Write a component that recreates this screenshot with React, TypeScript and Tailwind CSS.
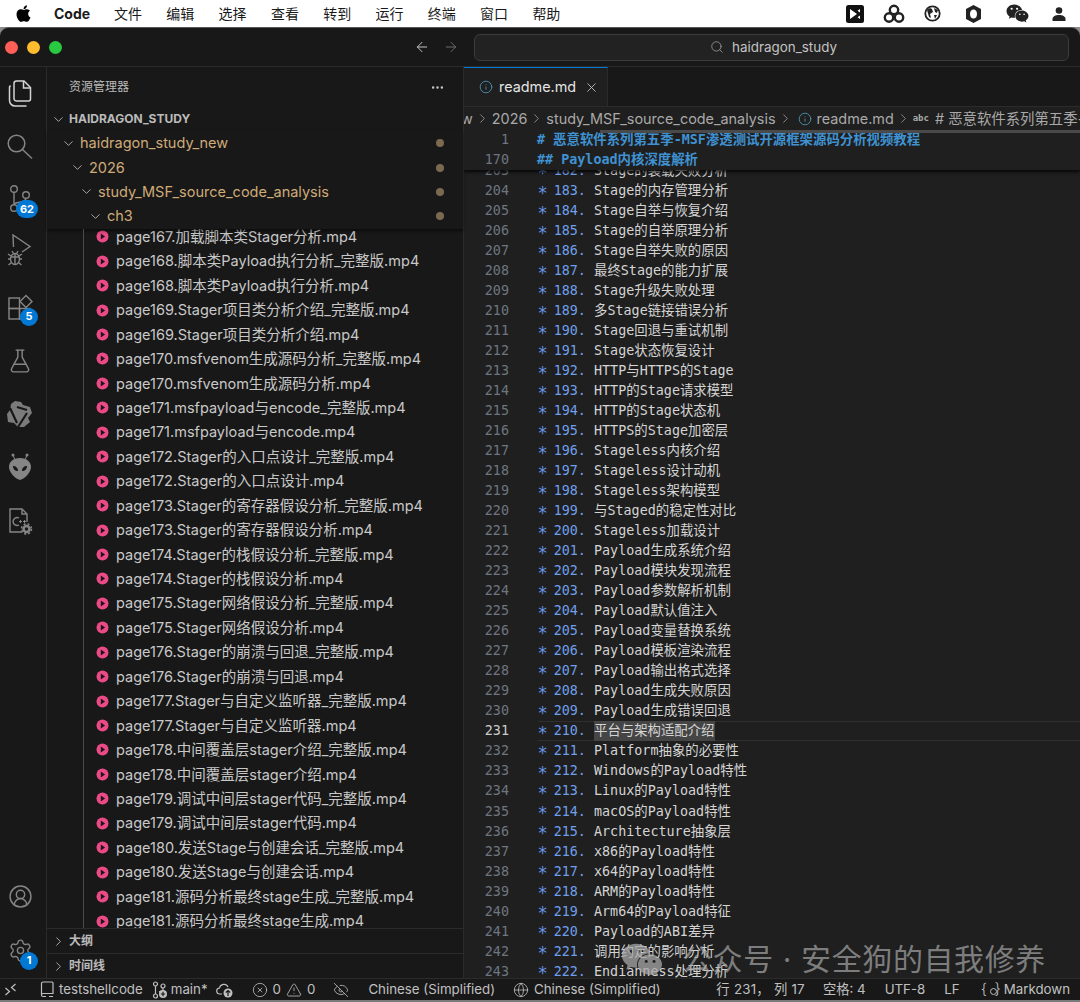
import { ArrowLeft, ArrowRight, ChevronDown, ChevronRight, CircleUserRound, CircleX, Ellipsis, EyeOff, FlaskConical, Globe, Info, Search, Settings, TriangleAlert, X } from "lucide-react";
import { FaApple, FaWeixin } from "react-icons/fa";

const ui = "font-['Inter','Noto_Sans_CJK_SC',sans-serif]";
const mono = "font-['DejaVu_Sans_Mono','Noto_Sans_CJK_SC',monospace]";

const menus = ["文件", "编辑", "选择", "查看", "转到", "运行", "终端", "窗口", "帮助"];

const files = [
  "page167.加载脚本类Stager分析.mp4",
  "page168.脚本类Payload执行分析_完整版.mp4",
  "page168.脚本类Payload执行分析.mp4",
  "page169.Stager项目类分析介绍_完整版.mp4",
  "page169.Stager项目类分析介绍.mp4",
  "page170.msfvenom生成源码分析_完整版.mp4",
  "page170.msfvenom生成源码分析.mp4",
  "page171.msfpayload与encode_完整版.mp4",
  "page171.msfpayload与encode.mp4",
  "page172.Stager的入口点设计_完整版.mp4",
  "page172.Stager的入口点设计.mp4",
  "page173.Stager的寄存器假设分析_完整版.mp4",
  "page173.Stager的寄存器假设分析.mp4",
  "page174.Stager的栈假设分析_完整版.mp4",
  "page174.Stager的栈假设分析.mp4",
  "page175.Stager网络假设分析_完整版.mp4",
  "page175.Stager网络假设分析.mp4",
  "page176.Stager的崩溃与回退_完整版.mp4",
  "page176.Stager的崩溃与回退.mp4",
  "page177.Stager与自定义监听器_完整版.mp4",
  "page177.Stager与自定义监听器.mp4",
  "page178.中间覆盖层stager介绍_完整版.mp4",
  "page178.中间覆盖层stager介绍.mp4",
  "page179.调试中间层stager代码_完整版.mp4",
  "page179.调试中间层stager代码.mp4",
  "page180.发送Stage与创建会话_完整版.mp4",
  "page180.发送Stage与创建会话.mp4",
  "page181.源码分析最终stage生成_完整版.mp4",
  "page181.源码分析最终stage生成.mp4",
];

const lines = [
  "Stage的装载失败分析", "Stage的内存管理分析", "Stage自举与恢复介绍", "Stage的自举原理分析", "Stage自举失败的原因",
  "最终Stage的能力扩展", "Stage升级失败处理", "多Stage链接错误分析", "Stage回退与重试机制", "Stage状态恢复设计",
  "HTTP与HTTPS的Stage", "HTTP的Stage请求模型", "HTTP的Stage状态机", "HTTPS的Stage加密层", "Stageless内核介绍",
  "Stageless设计动机", "Stageless架构模型", "与Staged的稳定性对比", "Stageless加载设计", "Payload生成系统介绍",
  "Payload模块发现流程", "Payload参数解析机制", "Payload默认值注入", "Payload变量替换系统", "Payload模板渲染流程",
  "Payload输出格式选择", "Payload生成失败原因", "Payload生成错误回退", "平台与架构适配介绍", "Platform抽象的必要性",
  "Windows的Payload特性", "Linux的Payload特性", "macOS的Payload特性", "Architecture抽象层", "x86的Payload特性",
  "x64的Payload特性", "ARM的Payload特性", "Arm64的Payload特征", "Payload的ABI差异", "调用约定的影响分析", "Endianness处理分析",
];

function Badge({ text, className }: { text: string; className: string }) {
  return (
    <span className={`absolute flex h-[18px] items-center justify-center rounded-full bg-[#0078d4] text-[11px] font-bold text-white ${className}`}>
      {text}
    </span>
  );
}

function MenuBar() {
  return (
    <div className={`flex h-[27px] shrink-0 items-center bg-white pl-[14px] text-[14px] text-[#1a1a1a] ${ui}`}>
      <FaApple size={19} className="text-black" />
      <span className="ml-[21px] w-[60px] font-bold">Code</span>
      <div className="flex gap-[24.3px]">
        {menus.map((m) => (
          <span key={m}>{m}</span>
        ))}
      </div>
      <div className="ml-auto flex items-center">
        <svg width="18" height="18" viewBox="0 0 18 18" className="mr-[19px]">
          <rect width="18" height="18" rx="2.500" fill="#111" />
          <path d="M4 4l7 5-7 5zM14 4v3.500L11.500 5.800zM14 14v-3.500l-2.500 1.700z" fill="#fff" />
        </svg>
        <svg width="22" height="20" viewBox="0 0 22 20" fill="none" stroke="#222" strokeWidth="2.400" className="mr-[19px]">
          <circle cx="11" cy="6" r="4.200" />
          <circle cx="6" cy="13.500" r="4.200" />
          <circle cx="16" cy="13.500" r="4.200" />
        </svg>
        <svg width="17" height="17" viewBox="0 0 17 17" className="mr-[25px]">
          <circle cx="8.500" cy="8.500" r="7.200" fill="none" stroke="#222" strokeWidth="1.800" />
          <path d="M3 5l3-2 2 1 1 3-3 2 1 4-2-1zM10 3l4 2-1 3-2-1zM10 10l3 0-2 4z" fill="#222" />
        </svg>
        <svg width="15" height="18" viewBox="0 0 15 18" className="mr-[25px]">
          <path fillRule="evenodd" d="M7.500 0l7.500 4v10l-7.500 4L0 14V4zM7.500 4.500C5.500 4.500 4 6 4 9s1.500 4.500 3.500 4.500S11 12 11 9 9.500 4.500 7.500 4.500z" fill="#222" />
        </svg>
        <FaWeixin size={23} className="mr-[23px] text-[#222]" />
        <svg width="14" height="14" viewBox="0 0 14 14" className="mr-[14px]">
          <circle cx="7" cy="3.500" r="3.300" fill="#222" />
          <path d="M0.500 14v-2c0-2.500 3-4 6.500-4s6.500 1.500 6.500 4v2z" fill="#222" />
        </svg>
      </div>
    </div>
  );
}

function TitleBar() {
  return (
    <div className={`flex h-[39px] shrink-0 items-center border-b border-[#2b2b2b] pl-[5px] ${ui}`}>
      <span className="h-[13px] w-[13px] rounded-full bg-[#ff5f57]" />
      <span className="ml-[9px] h-[13px] w-[13px] rounded-full bg-[#febc2e]" />
      <span className="ml-[9px] h-[13px] w-[13px] rounded-full bg-[#28c840]" />
      <ArrowLeft size={16} strokeWidth={1.500} className="ml-[352px] text-[#c4c4c4]" />
      <ArrowRight size={16} strokeWidth={1.500} className="ml-[13px] text-[#6a6a6a]" />
      <div className="ml-[15px] flex h-[27px] w-[595px] items-center justify-center rounded-[6px] border border-[#3c3c3c] bg-[#222222] pl-[4px] text-[13.400px] text-[#c4c4c4]">
        <Search size={14} strokeWidth={1.300} className="mr-[8px] text-[#a8a8a8]" />
        haidragon_study
      </div>
    </div>
  );
}

function ActivityItem({ children }: { children: React.ReactNode }) {
  return <div className="relative flex h-[53.400px] w-[40px] items-center justify-center text-[#858585]">{children}</div>;
}

function ActivityBar() {
  return (
    <div className={`flex w-[47px] shrink-0 flex-col border-r border-[#2b2b2b] ${ui}`}>
      <ActivityItem>
        <svg width="24" height="27" viewBox="0 0 24 27" fill="none" stroke="#d4d4d4" strokeWidth="1.500">
          <path d="M8.500 1H16l6.500 6.500V19a2 2 0 0 1-2 2h-12a2.500 2.500 0 0 1-2.500-2.500V3.500A2.500 2.500 0 0 1 8.500 1z" />
          <path d="M15.500 1v7h7" />
          <path d="M2.500 5.500L1.500 7v13.500c0 3 2.500 5.500 5.500 5.500h11.500" />
        </svg>
      </ActivityItem>
      <ActivityItem>
        <svg width="26" height="26" viewBox="0 0 26 26" fill="none" stroke="currentColor" strokeWidth="1.500">
          <circle cx="9.500" cy="9.500" r="8.300" />
          <path d="M15.500 15.500L25 24.500" />
        </svg>
      </ActivityItem>
      <ActivityItem>
        <svg width="26" height="28" viewBox="0 0 26 28" fill="none" stroke="currentColor" strokeWidth="1.400" className="-translate-y-[1px]">
          <circle cx="7" cy="4" r="3.300" />
          <circle cx="7" cy="23" r="3.300" />
          <circle cx="19" cy="10" r="3.300" />
          <path d="M7 7.300v12.400M19 13.300c0 5-12 3-12 6.500" />
        </svg>
        <Badge text="62" className="left-[16px] top-[26px] w-[22px]" />
      </ActivityItem>
      <ActivityItem>
        <svg width="26" height="33" viewBox="0 0 26 33" fill="none" stroke="currentColor" strokeWidth="1.400" className="-translate-y-[3px]">
          <path d="M6.500 13L6 1l17 11.500-8 5.500" />
          <ellipse cx="8" cy="25" rx="4.500" ry="5.500" />
          <path d="M4 23h8M8 20v10M1 20l3 2M15 20l-3 2M1 25h2.500M15 25h-2.500M1.500 31l3-2.500M14.500 31l-3-2.500M5 17l1.500 2.500M11 17l-1.500 2.500" />
        </svg>
      </ActivityItem>
      <ActivityItem>
        <svg width="27" height="27" viewBox="0 0 27 27" fill="none" stroke="currentColor" strokeWidth="1.400">
          <rect x="2" y="4" width="10.500" height="10.500" />
          <rect x="2" y="14.500" width="10.500" height="10.500" />
          <rect x="12.500" y="14.500" width="10.500" height="10.500" />
          <path d="M19 1.500l6 6-6 6-6-6z" />
        </svg>
        <Badge text="5" className="left-[20px] top-[27px] w-[18px]" />
      </ActivityItem>
      <ActivityItem>
        <FlaskConical size={26} strokeWidth={1.300} />
      </ActivityItem>
      <ActivityItem>
        <svg width="28" height="28" viewBox="0 0 28 28" fill="#7b7b7b">
          <path d="M9 1L15 2L17 5L24 7L26 13L22 18L24 22L18 27L12 27L8 23L2 22L1 14L4 10L5 4Z" />
          <path d="M4 8L11 23M11 7L21 10M12 27L21 13" stroke="#181818" strokeWidth="2.200" fill="none" />
        </svg>
      </ActivityItem>
      <ActivityItem>
        <svg width="26" height="28" viewBox="0 0 26 28" fill="currentColor">
          <path fillRule="evenodd" d="M13 5c7 0 11 4 11 9 0 5-6 12-11 13C8 26 2 19 2 14c0-5 4-9 11-9zM6 13c0 3 2 5 5 5 0-3-2-5-5-5zm14 0c-3 0-5 2-5 5 3 0 5-2 5-5z" />
          <circle cx="6" cy="2" r="1.500" />
          <circle cx="20" cy="2" r="1.500" />
          <path d="M5.500 2h1l2 5h-1zM19.500 2h1l-2 5h-1z" />
        </svg>
      </ActivityItem>
      <ActivityItem>
        <svg width="26" height="28" viewBox="0 0 26 28" fill="none" stroke="currentColor" strokeWidth="1.400">
          <path d="M15 25H3V2h12l5 5v8" />
          <path d="M15 2v5h5" />
          <path d="M12 11a4 4 0 1 0 0 7" />
          <path d="M12 14.500h3M13.500 13v3M16 14.500h3M17.500 13v3" strokeWidth="1" />
          <circle cx="19.500" cy="22" r="3" strokeWidth="2.500" />
          <circle cx="19.500" cy="22" r="5" strokeWidth="1.500" strokeDasharray="2 2" />
        </svg>
      </ActivityItem>
      <div className="flex-1" />
      <ActivityItem>
        <CircleUserRound size={25} strokeWidth={1.400} />
      </ActivityItem>
      <div className="mb-[1px]">
        <ActivityItem>
          <Settings size={25} strokeWidth={1.300} />
          <Badge text="1" className="left-[20px] top-[28px] w-[18px]" />
        </ActivityItem>
      </div>
    </div>
  );
}

function FolderRow({ name, pad }: { name: string; pad: string }) {
  return (
    <div className={`flex h-[24.400px] items-center pr-[19px] text-[14.500px] text-[#cfab78] ${pad}`}>
      <ChevronDown size={15} strokeWidth={1.300} className="mr-[4px] text-[#c4c4c4]" />
      <span>{name}</span>
      <span className="ml-auto h-[8px] w-[8px] rounded-full bg-[#7c6a50]" />
    </div>
  );
}

function Sidebar() {
  return (
    <div className={`flex w-[417px] shrink-0 flex-col border-r border-[#2b2b2b] ${ui}`}>
      <div className="flex h-[40px] shrink-0 items-center pl-[22px] pr-[18px] text-[12px] text-[#bbbbbb]">
        资源管理器
        <Ellipsis size={15} className="ml-auto text-[#c4c4c4]" />
      </div>
      <div className="flex h-[24px] shrink-0 items-center pl-[4px] text-[12px] font-bold text-[#bbbbbb]">
        <ChevronDown size={15} strokeWidth={1.300} className="mr-[3px] text-[#c4c4c4]" />
        HAIDRAGON_STUDY
      </div>
      <div className="relative z-10 shrink-0 bg-[#181818] shadow-[0_2px_3px_rgba(0,0,0,0.5)]">
        <FolderRow name="haidragon_study_new" pad="pl-[14px]" />
        <FolderRow name="2026" pad="pl-[23px]" />
        <FolderRow name="study_MSF_source_code_analysis" pad="pl-[32px]" />
        <FolderRow name="ch3" pad="pl-[41px]" />
      </div>
      <div className="relative min-h-0 flex-1 overflow-hidden">
        <div className="absolute bottom-0 left-[36px] top-[-24px] z-20 w-px bg-[#4a4a4a]" />
        <div className="-mt-[4px]">
          {files.map((f, i) => (
            <div key={i} className="flex h-[24.450px] items-center pl-[49px] text-[14.500px] whitespace-nowrap text-[#c8c8c8]">
              <svg width="13" height="13" viewBox="0 0 13 13" className="mr-[7px] shrink-0">
                <circle cx="6.500" cy="6.500" r="6" fill="#ec4a86" />
                <path d="M4.800 3.400l4.300 3.100-4.300 3.100z" fill="#181818" />
              </svg>
              {f}
            </div>
          ))}
        </div>
      </div>
      <div className="flex h-[25px] shrink-0 items-center border-t border-[#2b2b2b] pl-[4px] text-[12px] font-bold text-[#bbbbbb]">
        <ChevronRight size={15} strokeWidth={1.300} className="mr-[3px] text-[#c4c4c4]" />
        大纲
      </div>
      <div className="flex h-[25px] shrink-0 items-center border-t border-[#2b2b2b] pl-[4px] text-[12px] font-bold text-[#bbbbbb]">
        <ChevronRight size={15} strokeWidth={1.300} className="mr-[3px] text-[#c4c4c4]" />
        时间线
      </div>
    </div>
  );
}

function Crumb() {
  return <ChevronRight size={15} strokeWidth={1.200} className="mx-[2px] shrink-0 text-[#a8a8a8]" />;
}

function Star() {
  return <span className="inline-block w-[16.200px] translate-y-[2px] text-[17px] leading-none text-[#6796e6]">*</span>;
}

function EditorLine({ no, item, text }: { no: number; item: number; text: string }) {
  const current = no === 231;
  return (
    <div className="flex h-[20.030px] items-center whitespace-pre">
      <span className={`w-[45px] text-right ${current ? "text-[#cccccc]" : "text-[#6e7681]"}`}>{no}</span>
      <div className={`ml-[28.500px] flex h-[20px] flex-1 items-center ${current ? "border-y border-[#2f2f2f]" : ""}`}>
        <Star />
        <span className="text-[#6f9fec]">{`${item}. `}</span>
        <span className={`text-[#d4d4d4] ${current ? "bg-[#454545]" : ""}`}>{text}</span>
      </div>
    </div>
  );
}

function Editor() {
  return (
    <div className="flex min-w-0 flex-1 flex-col bg-[#1f1f1f]">
      <div className={`flex h-[39px] shrink-0 bg-[#181818] text-[14.400px] ${ui}`}>
        <div className="flex w-[144px] items-center border-r border-t border-[#2b2b2b] border-t-[#0078d4] bg-[#1f1f1f] pl-[15px] text-[#e4e4e4]">
          <Info size={14} strokeWidth={1.400} className="mr-[6px] text-[#519aba]" />
          readme.md
          <X size={15} strokeWidth={1.400} className="ml-[8px] text-[#c4c4c4]" />
        </div>
      </div>
      <div className={`flex h-[24px] shrink-0 items-center overflow-hidden whitespace-nowrap border-t border-[#2b2b2b] text-[14.400px] text-[#a9a9a9] ${ui}`}>
        <span className="-ml-[3px]">w</span>
        <Crumb />
        <span>2026</span>
        <Crumb />
        <span>study_MSF_source_code_analysis</span>
        <Crumb />
        <Info size={14} strokeWidth={1.400} className="mx-[3px] shrink-0 text-[#519aba]" />
        <span className="ml-[2px]">readme.md</span>
        <Crumb />
        <span className={`mr-[6px] text-[9px] font-bold ${mono}`}>abc</span>
        <span className="min-w-0 overflow-hidden"># 恶意软件系列第五季-</span>
      </div>
      <div className={`relative min-h-0 flex-1 overflow-hidden text-[13.400px] leading-[20px] ${mono}`}>
        <div className="absolute left-[136px] right-0 top-0 z-30 h-[3px] bg-[#4a4a4a]" />
        <div className="relative z-20 bg-[#1f1f1f] font-bold shadow-[0_2px_3px_rgba(0,0,0,0.8)]">
          <div className="flex h-[20px] items-center">
            <span className="w-[45px] text-right font-normal text-[#6e7681]">1</span>
            <span className="ml-[28px] text-[#3f92d2]"># 恶意软件系列第五季-MSF渗透测试开源框架源码分析视频教程</span>
          </div>
          <div className="flex h-[20px] items-center">
            <span className="w-[45px] text-right font-normal text-[#6e7681]">170</span>
            <span className="ml-[28px] text-[#3f92d2]">## Payload内核深度解析</span>
          </div>
        </div>
        <div className="-mt-[9px]">
          {lines.map((t, i) => (
            <EditorLine key={i} no={203 + i} item={182 + i} text={t} />
          ))}
        </div>
      </div>
    </div>
  );
}

function StatusBar() {
  return (
    <div className={`flex h-[22px] shrink-0 items-center whitespace-nowrap border-t border-[#2b2b2b] text-[13.300px] text-[#c0c0c0] ${ui}`}>
      <svg width="14" height="14" viewBox="0 0 14 14" fill="none" stroke="currentColor" strokeWidth="1.200" className="ml-[4px]">
        <path d="M1.500 5l4 3.500-4 3.500M11.500 1L7.500 4.500l4 3.500" />
      </svg>
      <svg width="14" height="17" viewBox="0 0 14 17" fill="none" stroke="currentColor" strokeWidth="1.200" className="ml-[22px]">
        <path d="M3 1h9a1 1 0 0 1 1 1v10.500H3a1.500 1.500 0 0 0-1.500 1.500V2.500A1.500 1.500 0 0 1 3 1z" />
        <path d="M1.500 14c0 1 .7 1.500 1.500 1.500h3M9 15.500h4" />
      </svg>
      <span className="ml-[5px]">testshellcode</span>
      <svg width="16" height="18" viewBox="0 0 16 18" fill="none" stroke="currentColor" strokeWidth="1.200" className="ml-[9px]">
        <circle cx="3.500" cy="3" r="2" />
        <circle cx="3.500" cy="15" r="2" />
        <circle cx="11" cy="5" r="2" />
        <path d="M3.500 5v8M11 7v2c0 1-2 1-4 2" />
        <circle cx="11" cy="13" r="4" fill="#c0c0c0" stroke="none" />
        <path d="M8.800 13h4.400M11 10.800v4.400" stroke="#181818" />
      </svg>
      <span className="ml-[3px]">main*</span>
      <svg width="17" height="16" viewBox="0 0 17 16" fill="none" stroke="currentColor" strokeWidth="1.200" className="ml-[8px]">
        <path d="M6 12H4a3 3 0 0 1-.5-6A4.500 4.500 0 0 1 12 5" />
        <circle cx="12" cy="11" r="4.500" fill="#c0c0c0" stroke="none" />
        <path d="M12 14V8.500M9.800 10.500L12 8.500l2.200 2" stroke="#181818" />
      </svg>
      <CircleX size={16} strokeWidth={1.200} className="ml-[19px]" />
      <span className="ml-[5px]">0</span>
      <TriangleAlert size={16} strokeWidth={1.200} className="ml-[5px]" />
      <span className="ml-[5px]">0</span>
      <EyeOff size={16} strokeWidth={1.200} className="ml-[18px]" />
      <span className="ml-[19px]">Chinese (Simplified)</span>
      <Globe size={16} strokeWidth={1.200} className="ml-[18px]" />
      <span className="ml-[5px]">Chinese (Simplified)</span>
      <span className="ml-auto tracking-[0.25px]">行 231， 列 17</span>
      <span className="ml-[18px]">空格: 4</span>
      <span className="ml-[19px]">UTF-8</span>
      <span className="ml-[19px]">LF</span>
      <span className="relative ml-[21px] flex w-[20px] items-center justify-between text-[15px] font-light">
        <span>{"{"}</span>
        <span>{"}"}</span>
        <span className="absolute left-[9px] top-[10px] h-[7px] w-[7px] rounded-full border border-[#bdbdbd] bg-[#181818]" />
      </span>
      <span className="ml-[3px] mr-[10px]">Markdown</span>
    </div>
  );
}

export default function App() {
  return (
    <div className="relative flex h-[1002px] w-[1080px] flex-col overflow-hidden bg-[#8a8a8a]">
      <MenuBar />
      <div className="flex min-h-0 flex-1 flex-col overflow-hidden rounded-t-[9px] border-t border-[#555] bg-[#181818]">
        <TitleBar />
        <div className="flex min-h-0 flex-1">
          <ActivityBar />
          <Sidebar />
          <Editor />
        </div>
        <StatusBar />
      </div>
      <div className="h-[2px] shrink-0 bg-[#7a7a7a]" />
      <div className={`absolute left-[621px] top-[937px] flex items-center whitespace-nowrap text-[30px] tracking-[0.6px] text-[#a8a8a8]/70 ${ui}`}>
        <FaWeixin size={42} className="mr-[19px] text-[#a8a8a8]/75" />
        公众号 · 安全狗的自我修养
      </div>
    </div>
  );
}
